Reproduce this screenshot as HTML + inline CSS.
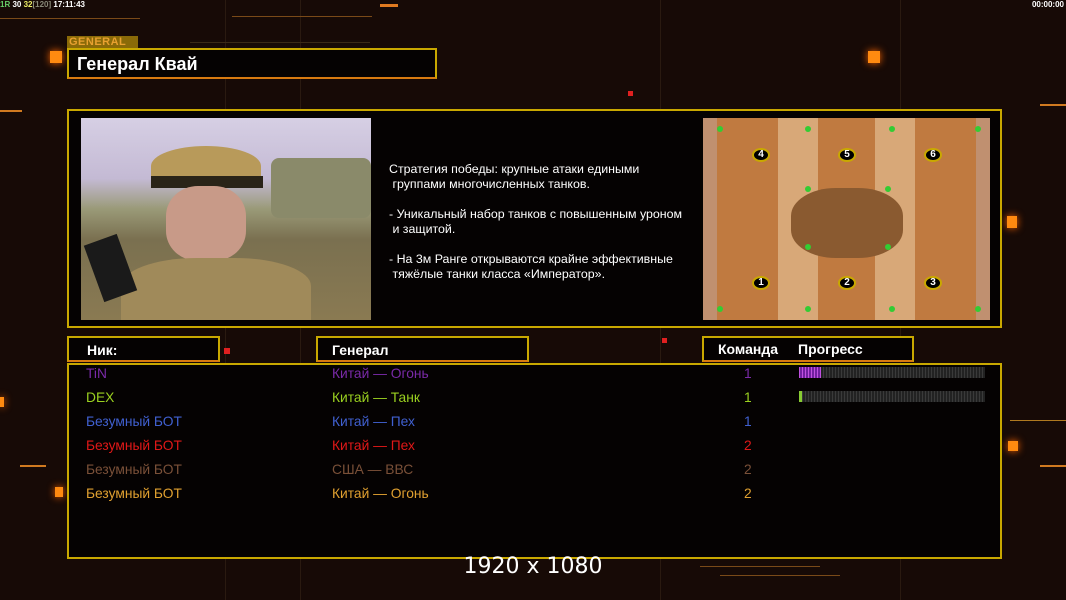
<!DOCTYPE html>
<html><head><meta charset="utf-8"><style>
*{margin:0;padding:0;box-sizing:border-box}
body{width:1066px;height:600px;overflow:hidden;background:#170a06;font-family:"Liberation Sans",sans-serif;position:relative;color:#fff}
.a{position:absolute}
.box{position:absolute;border:2px solid #c9a800;border-bottom-color:#d87a10;background:#050202}
.ln{position:absolute;background:#7a4a18;height:1px}
.vl{position:absolute;background:#2a1a10;width:1px}
.sq{position:absolute;width:10px;height:10px;background:#ff8a10;box-shadow:0 0 8px #f60}
.row{position:absolute;font-size:13.8px;height:16px;line-height:16px}
.hd{font-size:14px;font-weight:bold;position:absolute;top:4px}
.mk{position:absolute;width:18px;height:14px;border-radius:50%;background:#000;border:2px solid #c9a800;color:#fff;font-size:10px;font-weight:bold;text-align:center;line-height:10px}
.dol{position:absolute;width:6px;height:6px;border-radius:50%;background:#3c3}
</style></head><body>
<div class="vl" style="left:225px;top:0;height:600px"></div>
<div class="vl" style="left:300px;top:0;height:600px"></div>
<div class="vl" style="left:660px;top:0;height:600px"></div>
<div class="vl" style="left:900px;top:0;height:600px"></div>
<div class="ln" style="left:0;top:18px;width:140px"></div>
<div class="ln" style="left:232px;top:16px;width:140px"></div>
<div class="ln" style="left:190px;top:42px;width:180px;background:#3a2a18"></div>
<div class="ln" style="left:0;top:110px;width:22px;height:2px;background:#d07a20"></div>
<div class="ln" style="left:1040px;top:104px;width:26px;height:2px;background:#d07a20"></div>
<div class="ln" style="left:1010px;top:420px;width:56px;background:#b07a20"></div>
<div class="ln" style="left:20px;top:465px;width:26px;height:2px;background:#d07a20"></div>
<div class="ln" style="left:1040px;top:465px;width:26px;height:2px;background:#d07a20"></div>
<div class="ln" style="left:700px;top:566px;width:120px"></div>
<div class="ln" style="left:720px;top:575px;width:120px"></div>
<div class="ln" style="left:380px;top:4px;width:18px;height:3px;background:#e07a20"></div>
<div class="sq" style="left:50px;top:51px;width:12px;height:12px"></div>
<div class="sq" style="left:868px;top:51px;width:12px;height:12px"></div>
<div class="sq" style="left:1007px;top:216px;width:10px;height:12px"></div>
<div class="sq" style="left:1008px;top:441px"></div>
<div class="sq" style="left:55px;top:487px;width:8px"></div>
<div class="sq" style="left:0;top:397px;width:4px"></div>
<div class="a" style="left:224px;top:348px;width:6px;height:6px;background:#e02020"></div>
<div class="a" style="left:628px;top:91px;width:5px;height:5px;background:#e02020"></div>
<div class="a" style="left:662px;top:338px;width:5px;height:5px;background:#e02020"></div>
<div class="a" style="left:0;top:0;font-size:8px;font-weight:bold;line-height:9px;white-space:nowrap"><span style="color:#6c6">1R</span> 30 <span style="color:#ee6">32</span><span style="color:#887">[120]</span> 17:11:43</div>
<div class="a" style="right:2px;top:0;font-size:8px;font-weight:bold;line-height:9px">00:00:00</div>

<div class="a" style="left:67px;top:36px;width:71px;height:12px;background:#8a6a08;color:#e8a030;font-size:11px;font-weight:bold;line-height:12px;padding-left:2px;letter-spacing:0.5px">GENERAL</div>
<div class="box" style="left:67px;top:48px;width:370px;height:31px"><div class="a" style="left:8px;top:4px;font-size:18px;font-weight:bold">Генерал Квай</div></div>

<div class="box" style="left:67px;top:109px;width:935px;height:219px;border-bottom-color:#c9a800"></div>
<div class="a" style="left:81px;top:118px;width:290px;height:202px;background:linear-gradient(180deg,#d6cfe4 0%,#c4bad4 30%,#9a9a78 45%,#7a7050 60%,#8a7a52 100%);overflow:hidden">
 <div class="a" style="left:190px;top:40px;width:100px;height:60px;background:#8a8a6a;border-radius:8px"></div>
 <div class="a" style="left:70px;top:28px;width:110px;height:40px;background:#b89a5a;border-radius:50% 50% 10px 10px"></div>
 <div class="a" style="left:70px;top:58px;width:112px;height:12px;background:#2a2418"></div>
 <div class="a" style="left:85px;top:68px;width:80px;height:75px;background:#c89a88;border-radius:40%"></div>
 <div class="a" style="left:40px;top:140px;width:190px;height:70px;background:#a08a5a;border-radius:40% 40% 0 0"></div>
 <div class="a" style="left:12px;top:120px;width:35px;height:60px;background:#1a1a1a;transform:rotate(-20deg)"></div>
</div>
<div class="a" style="left:389px;top:162px;font-size:12.4px;line-height:15px;white-space:pre">Стратегия победы: крупные атаки едиными
 группами многочисленных танков.

- Уникальный набор танков с повышенным уроном
 и защитой.

- На 3м Ранге открываются крайне эффективные
 тяжёлые танки класса «Император».</div>
<div class="a" style="left:703px;top:118px;width:287px;height:202px;background:#c07a40;overflow:hidden">
 <div class="a" style="left:75px;top:0;width:40px;height:202px;background:#d8a878"></div>
 <div class="a" style="left:172px;top:0;width:40px;height:202px;background:#d8a878"></div>
 <div class="a" style="left:0;top:0;width:14px;height:202px;background:#c09070"></div>
 <div class="a" style="left:273px;top:0;width:14px;height:202px;background:#c09070"></div>
 <div class="a" style="left:88px;top:70px;width:112px;height:70px;background:#8a5a30;border-radius:40%"></div>
 <div class="mk" style="left:49px;top:30px">4</div><div class="mk" style="left:135px;top:30px">5</div><div class="mk" style="left:221px;top:30px">6</div>
 <div class="mk" style="left:49px;top:158px">1</div><div class="mk" style="left:135px;top:158px">2</div><div class="mk" style="left:221px;top:158px">3</div>
 <div class="dol" style="left:14px;top:8px"></div><div class="dol" style="left:102px;top:8px"></div><div class="dol" style="left:186px;top:8px"></div><div class="dol" style="left:272px;top:8px"></div>
 <div class="dol" style="left:102px;top:68px"></div><div class="dol" style="left:182px;top:68px"></div><div class="dol" style="left:102px;top:126px"></div><div class="dol" style="left:182px;top:126px"></div>
 <div class="dol" style="left:14px;top:188px"></div><div class="dol" style="left:102px;top:188px"></div><div class="dol" style="left:186px;top:188px"></div><div class="dol" style="left:272px;top:188px"></div>
</div>

<div class="box" style="left:67px;top:336px;width:153px;height:26px"><div class="hd" style="left:18px">Ник:</div></div>
<div class="box" style="left:316px;top:336px;width:213px;height:26px"><div class="hd" style="left:14px">Генерал</div></div>
<div class="box" style="left:702px;top:336px;width:212px;height:26px"><div class="hd" style="left:14px;top:3px">Команда</div><div class="hd" style="left:94px;top:3px">Прогресс</div></div>

<div class="box" style="left:67px;top:363px;width:935px;height:196px;border-bottom-color:#c9a800"></div>
<div class="row" style="top:366px;left:86px;color:#7a2aa8">TiN</div><div class="row" style="top:366px;left:332px;color:#7a2aa8">Китай — Огонь</div><div class="row" style="top:366px;left:744px;color:#7a2aa8">1</div>
<div class="row" style="top:390px;left:86px;color:#9ad020">DEX</div><div class="row" style="top:390px;left:332px;color:#9ad020">Китай — Танк</div><div class="row" style="top:390px;left:744px;color:#9ad020">1</div>
<div class="row" style="top:414px;left:86px;color:#4060d0">Безумный БОТ</div><div class="row" style="top:414px;left:332px;color:#4060d0">Китай — Пех</div><div class="row" style="top:414px;left:744px;color:#4060d0">1</div>
<div class="row" style="top:438px;left:86px;color:#e01818">Безумный БОТ</div><div class="row" style="top:438px;left:332px;color:#e01818">Китай — Пех</div><div class="row" style="top:438px;left:744px;color:#e01818">2</div>
<div class="row" style="top:462px;left:86px;color:#7a5038">Безумный БОТ</div><div class="row" style="top:462px;left:332px;color:#7a5038">США — ВВС</div><div class="row" style="top:462px;left:744px;color:#7a5038">2</div>
<div class="row" style="top:486px;left:86px;color:#e0a030">Безумный БОТ</div><div class="row" style="top:486px;left:332px;color:#e0a030">Китай — Огонь</div><div class="row" style="top:486px;left:744px;color:#e0a030">2</div>
<div class="a" style="left:799px;top:367px;width:186px;height:11px;background:repeating-linear-gradient(90deg,#3a3a3a 0 1px,#222 1px 3px)"></div>
<div class="a" style="left:799px;top:367px;width:22px;height:11px;background:repeating-linear-gradient(90deg,#c050e0 0 1px,#7020a0 1px 3px)"></div>
<div class="a" style="left:799px;top:391px;width:186px;height:11px;background:repeating-linear-gradient(90deg,#3a3a3a 0 1px,#222 1px 3px)"></div>
<div class="a" style="left:799px;top:391px;width:3px;height:11px;background:#8c3"></div>
<div class="a" style="left:0;width:1066px;top:553px;text-align:center;font-family:'DejaVu Sans',sans-serif;font-size:22px;line-height:28px">1920 x 1080</div>
</body></html>
